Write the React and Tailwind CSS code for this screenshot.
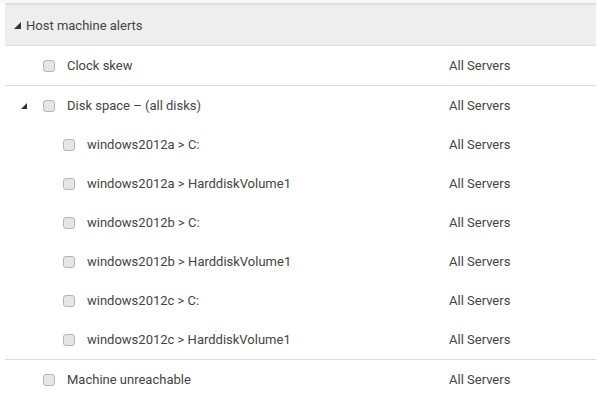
import React from "react";

const Tri = ({ s = 6 }) => (
  <svg width={s} height={s} viewBox="0 0 6 6" className="block">
    <polygon points="6,0 6,6 0,6" fill="#333" />
  </svg>
);

const Box = () => (
  <span className="block w-[12px] h-[12px] rounded-[3px] border border-[#b5b5b5] bg-[#e6e6e6]" />
);

const Row = ({ indent, label, tri }) => (
  <div className="flex items-center h-[39px]">
    <div className="w-[38px] shrink-0 flex justify-end pr-[16px]">{tri ? <Tri /> : null}</div>
    <div className={indent ? "w-[20px] shrink-0" : "w-0 shrink-0"} />
    <Box />
    <span className="ml-[12px] flex-1">{label}</span>
    <span className="w-[147px] shrink-0">All Servers</span>
  </div>
);

export default function App() {
  return (
    <div
      className="w-[597px] h-[398px] bg-white overflow-hidden text-[13px] text-[#444]"
      style={{ fontFamily: "Roboto, 'Liberation Sans', sans-serif" }}
    >
      <div className="h-[3px] bg-[#f7f7f7]" />
      <div className="ml-[5px] mr-[1px]">
        <div className="h-[2px] bg-[#dedede]" />
        <div className="h-[41px] pt-[1px] bg-[#eeeeee] border-b border-[#dddddd] flex items-center pl-[9px]">
          <Tri s={7} />
          <span className="ml-[5px]">Host machine alerts</span>
        </div>
        <div className="border-b border-[#dddddd]">
          <Row label="Clock skew" />
        </div>
        <div className="border-b border-[#dddddd]">
          <Row label="Disk space – (all disks)" tri />
          <Row indent label="windows2012a > C:" />
          <Row indent label="windows2012a > HarddiskVolume1" />
          <Row indent label="windows2012b > C:" />
          <Row indent label="windows2012b > HarddiskVolume1" />
          <Row indent label="windows2012c > C:" />
          <Row indent label="windows2012c > HarddiskVolume1" />
        </div>
        <Row label="Machine unreachable" />
      </div>
    </div>
  );
}
